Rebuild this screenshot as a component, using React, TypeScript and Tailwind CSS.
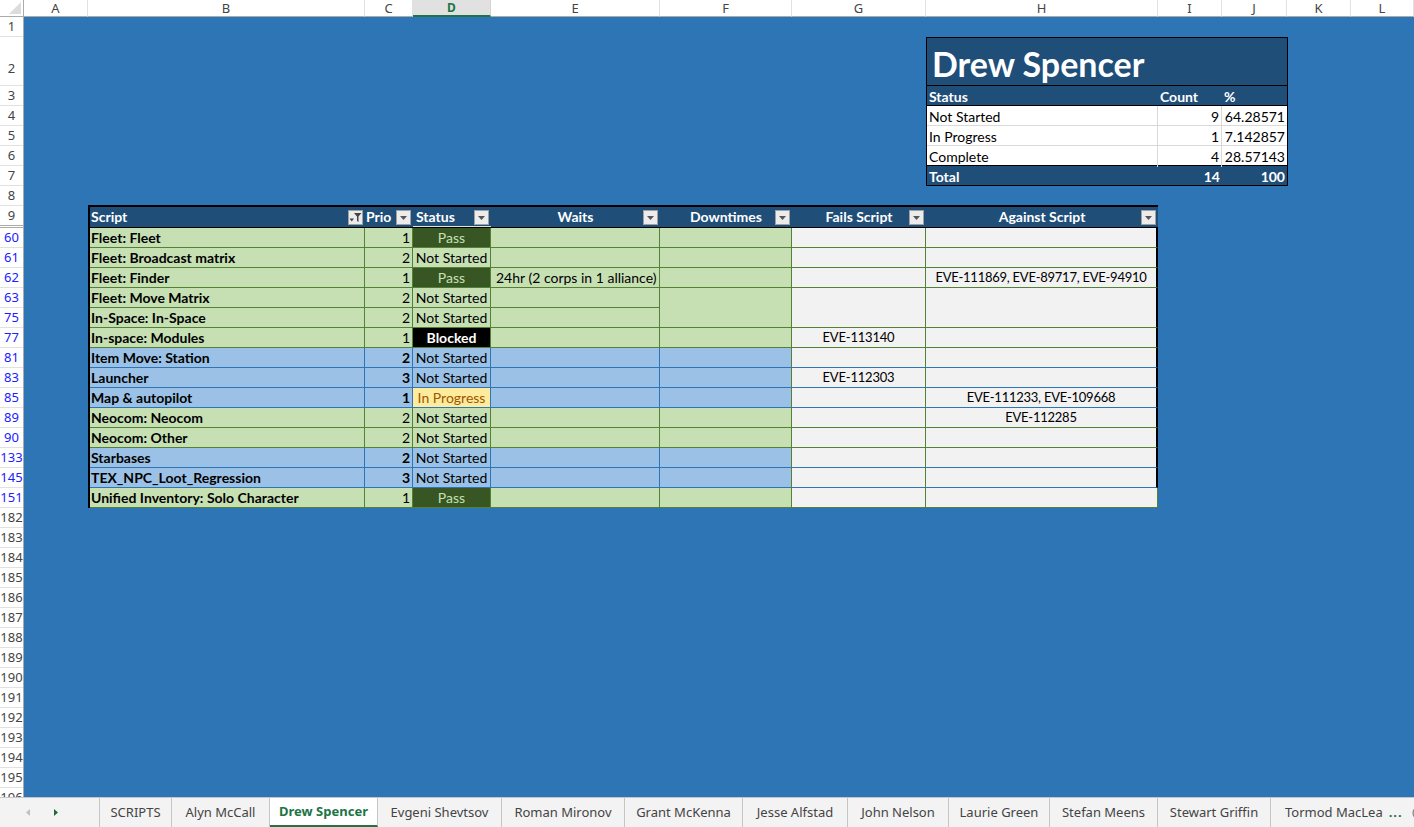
import React from 'react';

type Kind = 'g' | 'b';
type Status = 'Pass' | 'Not Started' | 'Blocked' | 'In Progress';

interface Row {
  n: number;
  kind: Kind;
  script: string;
  prio: number;
  status: Status;
  waits?: string;
  fails?: string;
  against?: string;
  merge?: 'start' | 'skip';
}

const rows: Row[] = [
  { n: 60, kind: 'g', script: 'Fleet: Fleet', prio: 1, status: 'Pass' },
  { n: 61, kind: 'g', script: 'Fleet: Broadcast matrix', prio: 2, status: 'Not Started' },
  {
    n: 62,
    kind: 'g',
    script: 'Fleet: Finder',
    prio: 1,
    status: 'Pass',
    waits: '24hr (2 corps in 1 alliance)',
    against: 'EVE-111869, EVE-89717, EVE-94910',
  },
  { n: 63, kind: 'g', script: 'Fleet: Move Matrix', prio: 2, status: 'Not Started', merge: 'start' },
  { n: 75, kind: 'g', script: 'In-Space: In-Space', prio: 2, status: 'Not Started', merge: 'skip' },
  { n: 77, kind: 'g', script: 'In-space: Modules', prio: 1, status: 'Blocked', fails: 'EVE-113140' },
  { n: 81, kind: 'b', script: 'Item Move: Station', prio: 2, status: 'Not Started' },
  { n: 83, kind: 'b', script: 'Launcher', prio: 3, status: 'Not Started', fails: 'EVE-112303' },
  { n: 85, kind: 'b', script: 'Map & autopilot', prio: 1, status: 'In Progress', against: 'EVE-111233, EVE-109668' },
  { n: 89, kind: 'g', script: 'Neocom: Neocom', prio: 2, status: 'Not Started', against: 'EVE-112285' },
  { n: 90, kind: 'g', script: 'Neocom: Other', prio: 2, status: 'Not Started' },
  { n: 133, kind: 'b', script: 'Starbases', prio: 2, status: 'Not Started' },
  { n: 145, kind: 'b', script: 'TEX_NPC_Loot_Regression', prio: 3, status: 'Not Started' },
  { n: 151, kind: 'g', script: 'Unified Inventory: Solo Character', prio: 1, status: 'Pass' },
];

const fill = { g: 'bg-[#c6e0b4]', b: 'bg-[#9bc2e6]' };
const lineB = { g: 'border-b-[#548235]', b: 'border-b-[#2e75b6]' };
const lineR = { g: 'border-r-[#548235]', b: 'border-r-[#2e75b6]' };

const statusStyle: Record<Status, string> = {
  Pass: 'bg-[#375623] text-[#c6e0b4]',
  'Not Started': '',
  Blocked: 'bg-black text-white font-bold',
  'In Progress': 'bg-[#ffeb9c] text-[#9c5700]',
};

const columns = [
  { l: 'A', w: 'w-[64px]' },
  { l: 'B', w: 'w-[277px]' },
  { l: 'C', w: 'w-[48px]' },
  { l: 'D', w: 'w-[78px]', sel: true },
  { l: 'E', w: 'w-[169px]' },
  { l: 'F', w: 'w-[132px]' },
  { l: 'G', w: 'w-[134px]' },
  { l: 'H', w: 'w-[232px]' },
  { l: 'I', w: 'w-[64px]' },
  { l: 'J', w: 'w-[65px]' },
  { l: 'K', w: 'w-[64px]' },
  { l: 'L', w: 'w-[63px]' },
];

const tabs = [
  { name: 'SCRIPTS', w: 'w-[72px]' },
  { name: 'Alyn McCall', w: 'w-[98px]' },
  { name: 'Drew Spencer', w: 'w-[108px]', active: true },
  { name: 'Evgeni Shevtsov', w: 'w-[124px]' },
  { name: 'Roman Mironov', w: 'w-[123px]' },
  { name: 'Grant McKenna', w: 'w-[118px]' },
  { name: 'Jesse Alfstad', w: 'w-[105px]' },
  { name: 'John Nelson', w: 'w-[101px]' },
  { name: 'Laurie Green', w: 'w-[101px]' },
  { name: 'Stefan Meens', w: 'w-[108px]' },
  { name: 'Stewart Griffin', w: 'w-[113px]' },
];

const ui = "font-['Noto_Sans',sans-serif]";
const cell = "font-['Lato',sans-serif]";

function ColumnHeaders() {
  return (
    <div className={`flex h-[17px] shrink-0 text-[13px] text-[#444] ${ui}`}>
      <div className="relative w-[24px] border-b border-r border-[#ababab] bg-white">
        <svg className="absolute bottom-[2px] right-[2px]" width="12" height="12" viewBox="0 0 12 12">
          <path d="M12 0V12H0z" fill="#dcdcdc" />
        </svg>
      </div>
      {columns.map((c) =>
        c.sel ? (
          <div
            key={c.l}
            className={`${c.w} flex items-center justify-center overflow-visible border-b-2 border-r border-b-[#217346] border-r-[#d4d4d4] bg-[#e1e1e1] pt-[1px] text-[12px] font-bold leading-[14px] text-[#217346]`}
          >
            {c.l}
          </div>
        ) : (
          <div
            key={c.l}
            className={`${c.w} flex items-center justify-center border-b border-r border-b-[#ababab] border-r-[#e1e1e1] bg-white leading-[15px]`}
          >
            {c.l}
          </div>
        ),
      )}
    </div>
  );
}

function RowHeaders() {
  const top = ['3', '4', '5', '6', '7', '8'];
  const tail = ['182', '183', '184', '185', '186', '187', '188', '189', '190', '191', '192', '193', '194', '195', '196'];
  const base = 'flex shrink-0 items-center justify-center border-b border-[#e1e1e1] leading-none';
  return (
    <div className={`flex w-[24px] shrink-0 flex-col border-r border-[#ababab] bg-white text-[13px] text-[#444] ${ui}`}>
      <div className={`h-[20px] ${base}`}>1</div>
      <div className="flex h-[49px] shrink-0 items-end justify-center border-b border-[#e1e1e1] pb-[10px] leading-none">
        2
      </div>
      {top.map((t) => (
        <div key={t} className={`h-[20px] ${base}`}>
          {t}
        </div>
      ))}
      <div className="flex h-[22px] shrink-0 items-center justify-center border-b-[3px] border-double border-[#ababab] leading-none">
        9
      </div>
      {rows.map((r) => (
        <div key={r.n} className={`h-[20px] ${base} text-[#2020ff]`}>
          {r.n}
        </div>
      ))}
      {tail.map((t) => (
        <div key={t} className={`h-[20px] ${base}`}>
          {t}
        </div>
      ))}
    </div>
  );
}

function Summary() {
  const data = [
    ['Not Started', '9', '64.28571'],
    ['In Progress', '1', '7.142857'],
    ['Complete', '4', '28.57143'],
  ];
  return (
    <div className={`ml-[902px] w-[362px] shrink-0 border border-black text-[14px] ${cell}`}>
      <div className="flex h-[48px] items-end border-b border-black bg-[#1f4e79] pb-[4px] pl-[5px] text-[34px] font-bold leading-none text-white">
        Drew Spencer
      </div>
      <div className="grid h-[20px] grid-cols-[231px_64px_65px] items-center border-b border-black bg-[#1f4e79] font-bold text-white">
        <span className="pl-[2px]">Status</span>
        <span className="pl-[2px]">Count</span>
        <span className="pl-[2px]">%</span>
      </div>
      {data.map((d, i) => (
        <div
          key={d[0]}
          className={`grid h-[20px] grid-cols-[231px_64px_65px] border-b bg-white text-black ${i === 2 ? 'border-black' : 'border-[#d9d9d9]'}`}
        >
          <span className="flex items-center border-r border-[#d9d9d9] pl-[2px]">{d[0]}</span>
          <span className="flex items-center justify-end border-r border-[#d9d9d9] pr-[2px]">{d[1]}</span>
          <span className="flex items-center justify-end pr-[2px]">{d[2]}</span>
        </div>
      ))}
      <div className="grid h-[19px] grid-cols-[231px_64px_65px] items-center bg-[#1f4e79] font-bold text-white">
        <span className="pl-[2px]">Total</span>
        <span className="pr-[2px] text-right">14</span>
        <span className="pr-[2px] text-right">100</span>
      </div>
    </div>
  );
}

function FilterButton({ funnel }: { funnel?: boolean }) {
  return (
    <span className="absolute right-[2px] top-[3px] flex h-[15px] w-[15px] items-center justify-center border border-[#a0a0a0] bg-[#ececec]">
      {funnel ? (
        <svg width="13" height="11" viewBox="0 0 13 11">
          <path d="M0.5 6.5h4.5l-2.25 3z" fill="#444" />
          <path d="M5 1h7.5l-3 3.6V10l-1.5-1V4.6z" fill="#444" />
        </svg>
      ) : (
        <svg width="7" height="4" viewBox="0 0 7 4">
          <path d="M0 0h7L3.5 4z" fill="#555" />
        </svg>
      )}
    </span>
  );
}

function HeaderCell({ label, center, funnel }: { label: string; center?: boolean; funnel?: boolean }) {
  return (
    <div
      className={`relative flex h-[20px] items-center bg-[#1f4e79] font-bold text-white ${center ? 'justify-center' : 'pl-[1px]'}`}
    >
      <span>{label}</span>
      <FilterButton funnel={funnel} />
    </div>
  );
}

function DataTable() {
  return (
    <div
      className={`ml-[64px] mt-[19px] grid w-[1070px] shrink-0 grid-cols-[275px_48px_78px_169px_132px_134px_232px] border-l-2 border-t-2 border-black text-[14px] leading-none text-black ${cell}`}
    >
      <div className="col-span-7 grid grid-cols-[275px_48px_78px_169px_132px_134px_232px] border-b border-r-2 border-black">
        <HeaderCell label="Script" funnel />
        <HeaderCell label="Prio" />
        <div className="relative flex h-[20px] items-center border-b border-[#d9e8d0] bg-[#1f4e79] pl-[3px] font-bold text-white">
          <span>Status</span>
          <FilterButton />
        </div>
        <HeaderCell label="Waits" center />
        <HeaderCell label="Downtimes" center />
        <HeaderCell label="Fails Script" center />
        <HeaderCell label="Against Script" center />
      </div>
      {rows.map((r, i) => {
        const last = i === rows.length - 1;
        const base = `h-[20px] flex items-center border-b border-r ${lineB[r.kind]}`;
        const tall = r.merge === 'start' ? 'row-span-2 h-[40px]' : 'h-[20px]';
        return (
          <React.Fragment key={r.n}>
            <div className={`${base} ${lineR[r.kind]} ${fill[r.kind]} whitespace-nowrap pl-[1px] font-bold`}>{r.script}</div>
            <div
              className={`${base} ${lineR[r.kind]} ${fill[r.kind]} justify-end pr-[2px] ${r.kind === 'b' ? 'font-bold' : ''}`}
            >
              {r.prio}
            </div>
            <div
              className={`${base} ${lineR[r.kind]} justify-center whitespace-nowrap ${r.status === 'Not Started' ? fill[r.kind] : statusStyle[r.status]}`}
            >
              {r.status}
            </div>
            <div className={`${base} ${lineR[r.kind]} ${fill[r.kind]} whitespace-nowrap pl-[5px]`}>{r.waits}</div>
            {r.merge !== 'skip' && (
              <>
                <div className={`${tall} border-b border-r ${lineB[r.kind]} border-r-[#548235] ${fill[r.kind]}`} />
                <div
                  className={`${tall} flex items-center justify-center border-b border-r ${lineB[r.kind]} border-r-[#548235] bg-[#f2f2f2] text-[13px] tracking-[-0.2px]`}
                >
                  {r.fails}
                </div>
                <div
                  className={`${tall} flex items-center justify-center whitespace-nowrap border-b ${lineB[r.kind]} bg-[#f2f2f2] text-[13px] tracking-[-0.25px] ${last ? 'border-r border-r-[#548235]' : 'border-r-2 border-r-black'}`}
                >
                  {r.against}
                </div>
              </>
            )}
          </React.Fragment>
        );
      })}
    </div>
  );
}

function SheetTabs() {
  return (
    <div className={`flex h-[30px] shrink-0 border-t border-[#c6c6c6] bg-[#f3f3f3] text-[13px] text-[#444] ${ui}`}>
      <div className="flex w-[100px] items-center border-r border-[#c6c6c6]">
        <svg className="ml-[26px]" width="4" height="7" viewBox="0 0 4 7">
          <path d="M4 0v7L0 3.5z" fill="#c0c0c0" />
        </svg>
        <svg className="ml-[24px]" width="4" height="7" viewBox="0 0 4 7">
          <path d="M0 0v7l4-3.5z" fill="#1e6b3f" />
        </svg>
      </div>
      {tabs.map((t) =>
        t.active ? (
          <div
            key={t.name}
            className={`${t.w} flex items-center justify-center border-b-2 border-r border-b-[#217346] border-r-[#c6c6c6] bg-white font-bold text-[#217346]`}
          >
            {t.name}
          </div>
        ) : (
          <div key={t.name} className={`${t.w} flex items-center justify-center border-r border-[#c6c6c6]`}>
            {t.name}
          </div>
        ),
      )}
      <div className="flex flex-1 items-center overflow-hidden whitespace-nowrap pl-[14px]">
        <span>Tormod MacLea</span>
        <span className="ml-[6px] font-bold tracking-[1px] text-[#217346]">...</span>
        <svg className="ml-[9px] shrink-0" width="16" height="16" viewBox="0 0 16 16">
          <circle cx="8" cy="8" r="7" fill="none" stroke="#666" strokeWidth="1" />
        </svg>
      </div>
    </div>
  );
}

export default function App() {
  return (
    <div className="flex h-[827px] w-[1414px] flex-col overflow-hidden bg-white">
      <ColumnHeaders />
      <div className="flex h-[780px] shrink-0 overflow-hidden">
        <RowHeaders />
        <div className="flex flex-1 flex-col bg-[#2e75b6]">
          <div className="h-[20px] shrink-0" />
          <Summary />
          <DataTable />
        </div>
      </div>
      <SheetTabs />
    </div>
  );
}
